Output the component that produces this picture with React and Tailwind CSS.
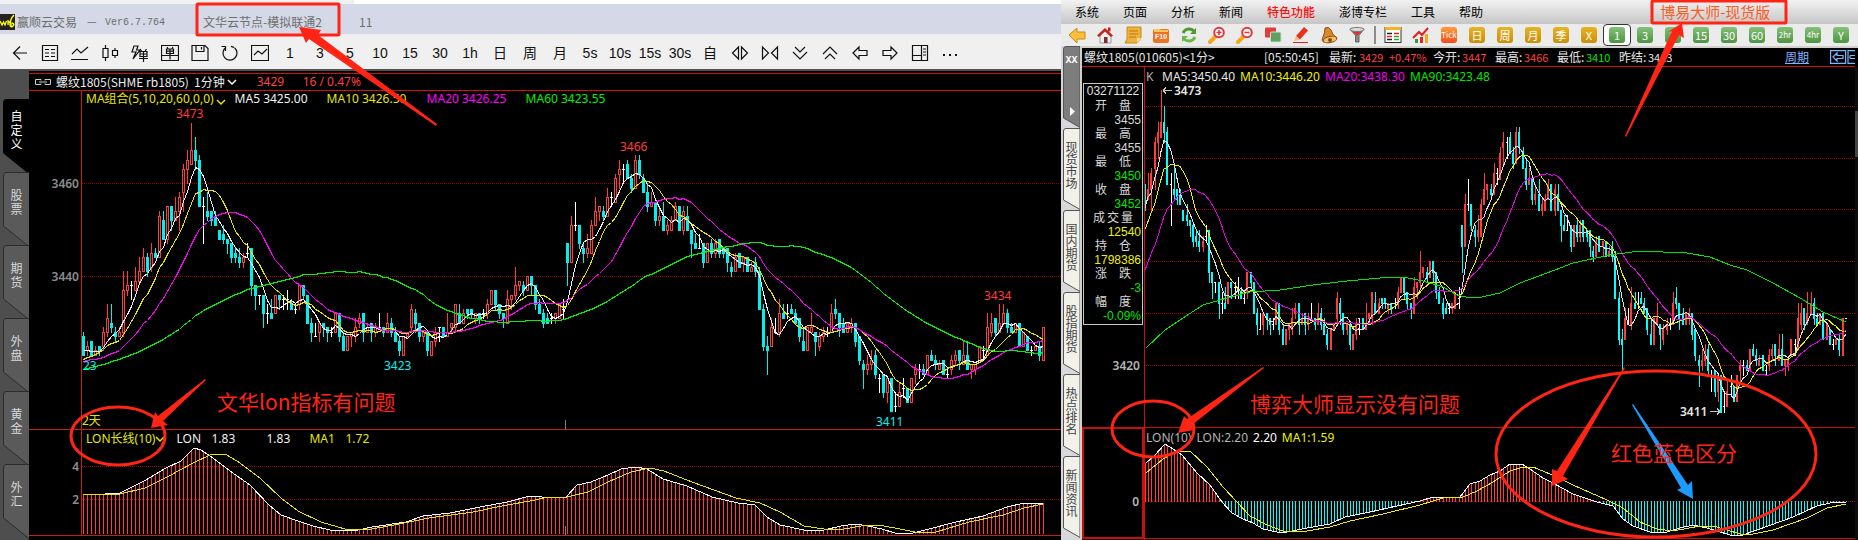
import React from 'react';

// open, high, low, close (minus 3400), one minute bars
const BARS = [
  [27,28,23,23],[24,26,23,25],[26,26,23,23],[23,25,23,24],[25,25,23,24],[25,29,24,28],[28,34,27,31],[30,34,28,29],[28,29,26,27],[27,29,27,28],
  [28,41,27,37],[37,41,36,38],[38,39,35,38],[37,42,37,39],[39,44,39,41],[41,46,41,44],[44,45,40,41],[42,47,41,45],[45,46,44,44],[44,54,44,53],
  [52,54,48,48],[48,55,47,55],[55,55,50,52],[52,57,52,54],[54,58,50,57],[58,64,54,63],[63,67,60,65],[64,73,64,67],[67,70,63,65],[65,66,55,55],
  [55,57,47,55],[54,58,52,53],[54,54,51,52],[53,54,51,51],[50,50,48,48],[49,51,47,48],[48,48,45,47],[47,47,43,44],[45,46,43,44],[44,46,42,43],
  [43,45,42,44],[45,47,44,45],[46,46,36,38],[38,38,33,36],[36,36,34,36],[36,36,29,32],[32,34,30,32],[32,35,31,31],[32,36,32,36],[36,36,33,35],
  [35,36,33,35],[35,37,33,35],[34,35,33,33],[33,34,32,33],[34,38,33,38],[38,38,35,36],[36,36,30,30],[30,31,26,28],[27,30,27,27],[28,30,26,30],
  [30,30,27,29],[29,29,26,28],[28,29,27,28],[28,32,28,32],[32,32,26,27],[27,28,24,24],[24,27,24,27],[27,28,25,28],[27,31,26,29],[30,32,29,31],
  [32,32,26,28],[28,30,28,29],[30,30,26,28],[28,30,27,29],[29,32,29,29],[29,29,27,28],[28,32,28,30],[30,31,27,28],[28,29,26,26],[26,27,23,24],
  [23,27,23,27],[27,28,27,28],[29,34,28,33],[32,33,28,30],[30,30,26,27],[27,28,26,28],[28,28,23,24],[23,26,23,26],[26,29,25,28],[29,29,26,29],
  [29,29,27,27],[27,32,27,28],[29,30,28,30],[29,34,28,34],[32,34,30,30],[30,33,30,32],[33,33,31,32],[33,33,31,32],[31,32,30,32],[32,32,30,31],
  [32,33,31,32],[32,35,31,34],[34,37,34,37],[37,37,33,34],[34,34,31,32],[32,32,29,31],[30,37,30,35],[35,36,33,36],[36,42,35,38],[38,39,37,39],
  [38,39,36,37],[37,40,37,40],[40,40,36,38],[38,38,33,34],[34,35,32,32],[32,33,29,30],[31,32,30,30],[31,32,30,31],[31,32,30,32],[31,34,31,34],
  [33,35,31,33],[47,47,38,43],[43,53,43,51],[51,56,50,51],[51,51,46,47],[46,47,43,45],[45,49,44,46],[45,52,45,51],[51,57,51,54],[54,55,52,55],
  [54,55,52,53],[53,59,53,57],[57,58,55,57],[56,62,56,61],[62,65,59,63],[63,64,60,63],[64,65,61,61],[61,62,58,59],[59,66,59,65],[65,66,61,62],
  [61,62,58,58],[58,60,54,55],[55,58,55,56],[56,56,51,52],[52,55,51,53],[53,56,50,50],[50,52,49,51],[50,53,50,52],[52,56,52,55],[55,55,50,50],
  [50,55,49,54],[53,55,50,50],[50,50,44,47],[47,49,46,46],[46,49,46,46],[47,47,42,43],[43,47,43,47],[47,48,44,45],[45,48,44,47],[48,48,44,45],
  [46,46,44,45],[46,46,41,43],[42,43,40,41],[41,45,41,44],[45,45,42,42],[43,44,41,44],[44,44,41,41],[41,43,41,42],[43,44,40,41],[41,42,33,33],
  [33,34,24,25],[25,27,19,24],[25,31,25,29],[28,31,28,28],[28,35,27,32],[32,34,31,31],[32,34,31,32],[33,34,32,32],[32,33,30,30],[31,31,26,27],
  [26,29,24,24],[24,29,24,29],[28,32,28,29],[28,28,23,26],[25,28,24,27],[27,29,26,28],[28,29,27,28],[28,34,28,32],[33,35,31,32],[32,32,27,29],
  [30,31,28,28],[28,30,28,30],[29,31,28,30],[30,30,25,26],[27,27,21,22],[21,22,16,20],[20,23,19,21],[21,24,20,22],[23,24,18,19],[18,19,15,18],
  [19,19,14,15],[15,18,13,18],[18,18,11,11],[12,15,11,12],[12,17,12,15],[16,18,14,16],[16,16,13,13],[13,18,13,18],[19,21,17,20],[20,21,18,20],
  [20,21,19,19],[19,23,19,23],[23,24,22,22],[22,23,20,21],[20,22,20,21],[22,22,19,19],[19,20,18,19],[20,23,19,22],[22,24,21,23],[24,24,20,22],
  [21,26,21,23],[23,26,20,20],[20,21,18,21],[20,21,19,21],[22,25,22,25],[24,25,22,24],[23,32,23,29],[28,32,27,30],[31,31,27,28],[28,34,28,30],
  [30,34,30,32],[32,33,28,29],[29,30,28,28],[28,30,28,30],[30,30,25,25],[25,28,25,28],[27,27,24,24],[24,25,23,24],[24,25,24,25],[25,26,22,23],
  [22,29,22,29],
];

// the right terminal already has the next minute open
const BARS_B = [...BARS, [29, 29, 29, 29]];

// closes before the first visible bar, so the averages start with the chart
const WARMUP = [
  ...Array(10).fill(12.6), ...Array(10).fill(19.1), ...Array(20).fill(22.5),
  ...Array(10).fill(21.5), ...Array(5).fill(20.2), ...Array(4).fill(24.25),
];
const CLOSES = [...WARMUP, ...BARS_B.map((b) => b[3])];

const average = (n, bars) =>
  bars.map((_, i) => {
    const end = i + WARMUP.length + 1;
    return CLOSES.slice(end - n, end).reduce((a, b) => a + b, 0) / n;
  });

const UP = '#ff3c3c';
const DOWN = '#00f0f0';

const toPath = (points) => points.map(([x, y]) => `${x},${y}`).join(' ');

const valueAt = (points, x) => {
  const k = points.findIndex((p) => p[0] >= x);
  if (k === 0) return points[0][1];
  if (k < 0) return points[points.length - 1][1];
  const [x0, y0] = points[k - 1];
  const [x1, y1] = points[k];
  return y0 + ((y1 - y0) * (x - x0)) / (x1 - x0);
};

const LON_A = [[83,494],[105,494],[120,493],[144,481],[156,474],[166,468],[181,461],[194,448],[201,450],[213,458],[230,471],[250,485],[269,505],[281,515],[298,521],[313,526],[330,530],[358,530],[372,527],[406,522],[423,516],[450,513],[480,507],[507,502],[530,496],[554,498],[566,497],[577,485],[591,482],[608,475],[621,469],[636,467],[647,469],[663,479],[687,486],[712,497],[738,503],[755,505],[767,517],[780,525],[804,530],[824,530],[841,526],[855,524],[868,526],[882,529],[895,533],[909,534],[929,529],[956,522],[983,516],[1007,507],[1024,503],[1043,503]];
const LON_A_MA = [[83,494],[120,494],[145,488],[169,476],[193,463],[210,455],[225,454],[237,461],[260,478],[281,498],[298,511],[321,522],[345,529],[372,529],[399,524],[429,518],[473,512],[507,505],[530,501],[544,498],[567,497],[588,492],[608,482],[631,472],[650,468],[664,471],[692,482],[736,498],[760,503],[780,512],[804,526],[824,529],[844,529],[861,526],[878,525],[895,528],[915,532],[936,532],[969,522],[1003,515],[1024,508],[1043,504]];
const LON_B = [[1146,463],[1155,455],[1165,444],[1173,449],[1182,455],[1197,473],[1210,485],[1222,502],[1232,513],[1243,519],[1253,523],[1263,529],[1277,532],[1287,532],[1307,528],[1330,524],[1345,517],[1370,512],[1397,506],[1420,501],[1433,497],[1460,497],[1470,484],[1480,481],[1490,475],[1500,471],[1510,464],[1522,464],[1530,469],[1543,478],[1553,483],[1573,494],[1597,502],[1613,506],[1623,519],[1633,526],[1650,532],[1667,532],[1680,528],[1693,525],[1707,528],[1730,535],[1743,535],[1757,530],[1793,517],[1817,506],[1830,503],[1846,502]];
const LON_B_MA = [[1146,473],[1163,459],[1177,451],[1190,451],[1207,467],[1223,487],[1237,502],[1250,516],[1267,525],[1283,531],[1307,531],[1330,527],[1350,521],[1383,514],[1420,505],[1443,498],[1463,497],[1477,491],[1493,482],[1510,471],[1523,467],[1533,467],[1550,474],[1573,485],[1607,500],[1623,508],[1640,522],[1657,529],[1673,531],[1700,526],[1717,527],[1740,534],[1753,534],[1773,530],[1807,518],[1827,508],[1846,504]];
const MA90 = [[1146,348],[1165,330],[1180,320],[1203,305],[1227,298],[1250,292],[1280,290],[1313,285],[1347,281],[1380,278],[1403,277],[1423,281],[1443,287],[1457,295],[1470,298],[1482,297],[1500,293],[1520,283],[1555,270],[1573,263],[1610,255],[1640,251],[1663,252],[1687,253],[1710,257],[1730,265],[1747,270],[1773,283],[1800,298],[1823,312],[1846,322]];

const TEXT = 'font-["Noto_Sans","Noto_Sans_CJK_SC",sans-serif] text-xs';

const Line = ({ points, color }) => (
  <polyline points={toPath(points)} fill="none" stroke={color} strokeWidth="1" />
);

const Grid = ({ ys, x1, x2 }) =>
  ys.map((y) => <line key={y} x1={x1} x2={x2} y1={y + 0.5} y2={y + 0.5} stroke="#a00000" strokeDasharray="1 1" />);

function HollowCandle({ bar, x, y }) {
  const [o, h, l, c] = bar;
  const top = Math.round(y(Math.max(o, c)));
  const bottom = Math.round(y(Math.min(o, c)));
  const high = Math.round(y(h));
  const low = Math.round(y(l));
  const color = o === c ? '#fff' : c > o ? UP : DOWN;
  return (
    <g>
      <rect x={x} y={high} width="1" height={low - high + 1} fill={color} />
      {c > o && <rect x={x - 0.5} y={top + 0.5} width="2" height={bottom - top} fill="#000" stroke={color} />}
      {c <= o && <rect x={x - 1} y={top} width="3" height={bottom - top + 1} fill={color} />}
    </g>
  );
}

function SolidCandle({ bar, x, y }) {
  const [o, h, l, c] = bar;
  const top = Math.round(y(Math.max(o, c)));
  const bottom = Math.round(y(Math.min(o, c)));
  const high = Math.round(y(h));
  const color = o === c ? '#fff' : c > o ? UP : '#00ffff';
  return (
    <g fill={color}>
      <rect x={x} y={high} width="1" height={Math.round(y(l)) - high + 1} />
      <rect x={x - 1} y={top} width="2" height={bottom - top + 1} />
    </g>
  );
}

const leftX = (i) => 83 + 4 * i;
const leftY = (p) => 183 + (60 - p) * 4.65;
const rightX = (i) => Math.round(1161 + (i - 27) * 3.2);
const rightY = (p) => 106 + (70 - p) * 5.18;

function LeftPriceChart() {
  const line = (n) => average(n, BARS).map((v, i) => [leftX(i) + 0.5, Math.round(leftY(v)) + 0.5]);
  return (
    <svg viewBox="29 91 1032 338" className={`block w-full ${TEXT}`} shapeRendering="crispEdges">
      <Grid ys={[183, 276]} x1={82} x2={1061} />
      {BARS.map((b, i) => <HollowCandle key={i} bar={b} x={leftX(i)} y={leftY} />)}
      <Line points={line(5)} color="#f0f0f0" />
      <Line points={line(10)} color="#e6e600" />
      <Line points={line(20)} color="#ff00ff" />
      <Line points={line(60)} color="#00f000" />
      <rect x="81" y="91" width="1" height="338" fill="#c81e14" />
      <rect x="565" y="420" width="1" height="9" fill="#808080" />
      <g fill="#8c8c8c" fontWeight="600" textAnchor="end">
        <text x="79" y="188">3460</text>
        <text x="79" y="281">3440</text>
      </g>
      <g fill={UP}>
        <text x="176" y="118">3473</text>
        <text x="620" y="151">3466</text>
        <text x="984" y="300">3434</text>
      </g>
      <g fill={DOWN}>
        <text x="83" y="370">23</text>
        <text x="384" y="370">3423</text>
        <text x="876" y="426">3411</text>
      </g>
      <text x="82" y="425" fill="#e6e600">2天</text>
    </svg>
  );
}

function LeftLonChart() {
  return (
    <svg viewBox="29 430 1032 105" className={`block w-full ${TEXT}`} shapeRendering="crispEdges">
      <Grid ys={[466, 499]} x1={82} x2={1061} />
      {BARS.map((_, i) => {
        const top = Math.round(valueAt(LON_A, leftX(i)));
        return <rect key={i} x={leftX(i)} y={top} width="1" height={534 - top} fill={UP} />;
      })}
      <Line points={LON_A} color="#fff" />
      <Line points={LON_A_MA} color="#e6e600" />
      <rect x="81" y="430" width="1" height="105" fill="#c81e14" />
      <rect x="565" y="526" width="1" height="9" fill="#808080" />
      <g fill="#8c8c8c" fontWeight="600" textAnchor="end">
        <text x="79" y="471">4</text>
        <text x="79" y="504">2</text>
      </g>
    </svg>
  );
}

function RightPriceChart() {
  const line = (n) => average(n, BARS_B).map((v, i) => [rightX(i), rightY(v)]).slice(22);
  return (
    <svg viewBox="1145 67 710 360" className={`block w-full ${TEXT}`} shapeRendering="crispEdges">
      <Grid ys={[106, 158, 209, 261, 313, 365]} x1={1146} x2={1855} />
      {BARS_B.map((b, i) => i >= 22 && <SolidCandle key={i} bar={b} x={rightX(i)} y={rightY} />)}
      <Line points={line(5)} color="#e0e0e0" />
      <Line points={line(10)} color="#f0f000" />
      <Line points={line(20)} color="#e600e6" />
      <Line points={MA90} color="#00e600" />
      <g fill="#e6e6e6" fontWeight="600">
        <text x="1174" y="95">3473</text>
        <text x="1680" y="416">3411</text>
      </g>
      <path d="M1163 90.5h9M1163 90.5l3-3M1163 90.5l3 3M1710 411.5h10M1720 411.5l-3-3M1720 411.5l-3 3" stroke="#c8c8c8" fill="none" />
    </svg>
  );
}

function RightLonChart() {
  return (
    <svg viewBox="1145 428 710 110" className="block w-full" shapeRendering="crispEdges">
      <Grid ys={[501]} x1={1146} x2={1855} />
      {BARS_B.map((_, i) => {
        if (i < 22) return null;
        const v = Math.round(valueAt(LON_B, rightX(i)));
        return v < 502
          ? <rect key={i} x={rightX(i)} y={v} width="1" height={502 - v} fill={UP} />
          : <rect key={i} x={rightX(i)} y={501} width="1" height={v - 501} fill="#00ffff" />;
      })}
      <Line points={LON_B} color="#fff" />
      <Line points={LON_B_MA} color="#f0f000" />
    </svg>
  );
}

const Ico = ({ children, size = 18 }) => (
  <svg width={size} height={size} viewBox="0 0 18 18" fill="none" stroke="#111" strokeWidth="1.2">
    {children}
  </svg>
);

const LEFT_TOOLS = [
  ['back', <Ico><path d="M3 9h13M9 2.500L2.500 9L9 15.500" /></Ico>],
  ['list', <Ico><path d="M1.500 1.500h15v15h-15zM4 5.500h4M10 5.500h4M4 9h4M10 9h4M4 12.500h4M10 12.500h4" /></Ico>],
  ['trend', <Ico><path d="M1 10l5-5 4 4 7-6M0 15.500h17" /></Ico>],
  ['candles', <Ico><path d="M2 4.500h5v9H2zM4.500 1v3.500M4.500 13.500V17M11.500 6.500h5v5h-5zM14 4v2.500M14 11.500V14" /></Ico>],
  ['flash order', <Ico><path d="M7 2H3L1 8h4l-3 7 7-9H5.500zM9 5l1.500 2M15.500 5L14 7M9 7.500h7v5H9zM9 10h7M8 14.500h9M12.500 7.500V18" /></Ico>],
  ['order', <Ico><path d="M.5 1.500h17v15H.5zM6 3l1 1.500M12 3l-1 1.500M5.500 5h7v4.500h-7zM5.500 7.200h7M1 11.500h16M9 5v10.500" /></Ico>],
  ['save', <Ico><path d="M1 1.500h13l3 3v12H1zM5 1.500v6h8v-6M10.500 3v2.500" /></Ico>],
  ['refresh', <Ico><path d="M5 3.300A7 7 0 1 0 13.500 3.700M4.500 7V2.500H0.500M10 2.300A7 7 0 0 1 13 3.500" /></Ico>],
  ['chart', <Ico><path d="M.5 1.500h17v15H.5zM3 11l4-4 4 3 5-5" /></Ico>],
  ['1'], ['3'], ['5'], ['10'], ['15'], ['30'], ['1h'], ['日'], ['周'], ['月'], ['5s'], ['10s'], ['15s'], ['30s'], ['自'],
  ['widen', <Ico><path d="M7.500 3v12L1.500 9zM10.500 3v12l6-6z" /></Ico>],
  ['narrow', <Ico><path d="M1.500 3v12l6-6zM16.500 3v12l-6-6z" /></Ico>],
  ['down', <Ico><path d="M4 3l5 5 5-5M2 8l7 7 7-7" /></Ico>],
  ['up', <Ico><path d="M4 15l5-5 5 5M2 10l7-7 7 7" /></Ico>],
  ['left', <Ico><path d="M2 9l6-6v3.500h8v5H8V15z" /></Ico>],
  ['right', <Ico><path d="M16 9l-6-6v3.500H2v5h8V15z" /></Ico>],
  ['layout', <Ico><path d="M1.500 1.500h15v15h-15zM10.500 1.500v15M1.500 11.500h9M12 5h3M12 8h3M12 11h3" /></Ico>],
  ['more', <Ico><path d="M2 11h2M8 11h2M14 11h2" strokeWidth="2" /></Ico>],
];

const Chevron = ({ color }) => (
  <svg width="10" height="7" viewBox="0 0 10 7" fill="none" stroke={color} strokeWidth="1.500"><path d="M1 1l4 4 4-4" /></svg>
);

const SIDE_TABS = ['自定义', '股票', '期货', '外盘', '黄金', '外汇'];

function SideTab({ label, active }) {
  return (
    <button className="relative -mb-[2px] block h-[75px] w-full shrink-0">
      <svg viewBox="0 0 29 75" className="absolute inset-0 h-full w-full">
        <path d="M29.500 .5H6Q3.500 .5 3.500 4V54L29.500 75z" fill={active ? '#000' : '#5a5a5a'} stroke={active ? '#000' : '#2c2c2c'} />
      </svg>
      <span className={`absolute inset-x-0 top-[10px] flex flex-col items-center pl-[4px] text-xs leading-[14px] ${active ? 'text-white' : 'pt-[6px] text-[#d8d8d8]'}`}>
        {[...label].map((ch) => <span key={ch}>{ch}</span>)}
      </span>
    </button>
  );
}

function LeftWindow() {
  return (
    <div className="flex min-w-0 flex-col bg-black">
      <div className="flex h-[4px]"><div className="w-1/3 bg-[#f0f0f0]" /><div className="flex-1 bg-white" /></div>
      <div className="flex h-[30px] items-center bg-[#d5d8e6] pt-[6px] text-xs text-[#6e6e6e]">
        <svg width="15" height="16" viewBox="0 0 15 16">
          <rect width="15" height="16" fill="#222" />
          <path d="M0 7l2 4 1.500-3 1.500 3 1.500-4M8 6v5M8 9q2-2 3 0v3" stroke="#ff0" strokeWidth="1.300" fill="none" />
          <path d="M14 1Q10 5 10 11q1 3 3 1t-1-3" stroke="#ff0" strokeWidth="1.500" fill="none" />
        </svg>
        <span className="ml-[2px] w-[88px]">赢顺云交易 <span className="ml-[6px]">－</span></span>
        <span className="w-[98px] pt-[2px] font-['Liberation_Mono',monospace] text-[10px]">Ver6.7.764</span>
        <span className="w-[156px]">文华云节点-模拟联通2</span>
        <span>11</span>
      </div>
      <div className="flex h-[35px] items-center bg-[#f0f0f0] pt-[2px] pl-[5px]">
        {LEFT_TOOLS.map(([name, icon]) => (
          <button key={name} aria-label={name} className="flex h-[30px] w-[30px] items-center justify-center font-['Liberation_Sans','Noto_Sans_CJK_SC',sans-serif] text-sm text-[#111]">
            {icon || name}
          </button>
        ))}
      </div>
      <div className="h-[2px] bg-[#505050]" />
      <div className="flex flex-1">
        <div className="flex w-[29px] shrink-0 flex-col overflow-hidden bg-[#4e4e4e] pt-[28px]">
          {SIDE_TABS.map((t, i) => <SideTab key={t} label={t} active={i === 0} />)}
        </div>
        <div className="min-w-0 flex-1">
          <div className="mt-[2px] flex h-[18px] items-center border-y border-[#d20f0a] text-xs text-[#ececec]">
            <svg width="16" height="6" viewBox="0 0 16 6" className="ml-[6px]" fill="none" stroke="#ccc"><path d="M6 1.500V.5H.5v5H6v-1M10 1.500V.5h5.500v5H10v-1M4 3h8" /></svg>
            <span className="ml-[5px] w-[138px] whitespace-nowrap">螺纹1805(SHME rb1805)</span>
            <span className="mr-[2px]">1分钟</span>
            <Chevron color="#fff" />
            <span className={`ml-[20px] w-[46px] text-[#ff4040] ${TEXT}`}>3429</span>
            <span className={`text-[#ff4040] ${TEXT}`}>16 / 0.47%</span>
          </div>
          <div className="relative">
            <div className={`absolute top-0 left-[57px] flex h-4 items-center whitespace-nowrap ${TEXT}`}>
              <span className="text-[#e6e600]">MA组合(5,10,20,60,0,0)</span>
              <span className="ml-[2px] pt-[6px]"><Chevron color="#e6e600" /></span>
              <span className="ml-[9px] w-[92px] text-[#f0f0f0]">MA5 3425.00</span>
              <span className="w-[100px] text-[#e6e600]">MA10 3426.50</span>
              <span className="w-[99px] text-[#ff00ff]">MA20 3426.25</span>
              <span className="text-[#00f000]">MA60 3423.55</span>
            </div>
            <LeftPriceChart />
          </div>
          <div className="relative border-y border-[#c81e14]">
            <div className={`absolute top-0 left-[57px] flex h-[18px] items-center whitespace-nowrap ${TEXT}`}>
              <span className="text-[#e6e600]">LON长线(10)</span>
              <Chevron color="#e6e600" />
              <span className="ml-[11px] w-[35px] text-[#f0f0f0]">LON</span>
              <span className="w-[55px] text-[#f0f0f0]">1.83</span>
              <span className="w-[43px] text-[#f0f0f0]">1.83</span>
              <span className="w-[36px] text-[#e6e600]">MA1</span>
              <span className="text-[#e6e600]">1.72</span>
            </div>
            <LeftLonChart />
          </div>
        </div>
      </div>
    </div>
  );
}

const Mini = ({ children }) => <svg width="18" height="18" viewBox="0 0 18 18">{children}</svg>;

const Magnifier = ({ plus }) => (
  <Mini>
    <path d="M2 16l6-6" stroke="#f5a81c" strokeWidth="4" strokeLinecap="round" />
    <circle cx="11" cy="6.500" r="4.800" fill="#fff" stroke="#e23a3a" strokeWidth="2" />
    <path d={plus ? 'M8.500 6.500h5M11 4v5' : 'M8.500 6.500h5'} stroke="#e23a3a" strokeWidth="1.600" />
  </Mini>
);

const RIGHT_ICONS = [
  ['back', <Mini><path d="M1 9l8-7v4h8v7H9v4z" fill="#f9bf3c" stroke="#c98a14" /></Mini>],
  ['home', <Mini><path d="M4 9v8h11V9L9 4z" fill="#eee" stroke="#999" /><path d="M1 9.500L9 2l8 7.500-2 1.500L9 5.500 3 11z" fill="#c8201c" /><rect x="12" y="1.500" width="2.500" height="4" fill="#c8201c" /><rect x="8" y="11" width="3.500" height="6" fill="#7a3030" /></Mini>],
  ['note', <Mini><path d="M3 1h14v11l-4 5H1l2-4z" fill="#eeb23c" stroke="#c98a1c" /><path d="M5 5h9M5 8h9M5 11h7" stroke="#b97a10" /><path d="M17 12h-4v5z" fill="#ffe08a" /></Mini>],
  ['F10', <Mini><rect x="1" y="3" width="16" height="14" rx="2" fill="#f07020" /><path d="M2 6V3h6l1 1h7v2z" fill="#f7c95a" /><text x="9" y="13" fontSize="7" fontWeight="700" fill="#fff" textAnchor="middle" fontFamily="Liberation Sans">F10</text></Mini>],
  ['refresh', <Mini><path d="M3 7q2-4 6-4 3 0 5 2" fill="none" stroke="#4f9a30" strokeWidth="3" /><path d="M16 2v6h-6z" fill="#4f9a30" /><path d="M15 11q-2 4-6 4-3 0-5-2" fill="none" stroke="#6bb845" strokeWidth="3" /><path d="M2 16v-6h6z" fill="#6bb845" /></Mini>],
  ['zoom in', <Magnifier plus />],
  ['zoom out', <Magnifier />],
  ['overlay', <Mini><rect x="1" y="1.500" width="11" height="10" rx="1" fill="#e23c3c" /><rect x="6.500" y="6" width="10.500" height="10" rx="1" fill="#5fa05f" stroke="#cde0cd" /></Mini>],
  ['draw', <Mini><path d="M4 10L12 1l4 3.500-8 9z" fill="#e8321e" /><path d="M4 10l4 3.500L2 15z" fill="#f5c07a" /><path d="M1 16.500h15" stroke="#d22" /></Mini>],
  ['alarm', <Mini><path d="M5 2q4-2 6 2 1 5 6 8L4 16Q1 15 3 11q2-4 2-9z" fill="#d98a2a" stroke="#8a4a10" /><ellipse cx="10" cy="13.500" rx="7" ry="3" transform="rotate(-12 10 13.500)" fill="#f5c060" stroke="#8a4a10" /><circle cx="10" cy="14" r="2" fill="#8a4a10" /></Mini>],
  ['filter', <Mini><path d="M2 3h14l-5 6.500V16H7.500V9.500z" fill="#8a8a8a" stroke="#666" /><path d="M4 5h10l-5 5z" fill="#e03030" /><ellipse cx="9" cy="3.500" rx="7" ry="2" fill="#ddd" stroke="#777" /></Mini>],
];

const BADGES = [
  ['Tick', 'from-[#ff9a3c] to-[#f04c1c]'],
  ['日', 'from-[#e6b422] to-[#c98e08]'], ['周', 'from-[#e6b422] to-[#c98e08]'], ['月', 'from-[#e6b422] to-[#c98e08]'],
  ['季', 'from-[#e6b422] to-[#c98e08]'], ['X', 'from-[#e6b422] to-[#c98e08]'],
  ['1', 'from-[#86c07a] to-[#4c9440]'], ['3', 'from-[#86c07a] to-[#4c9440]'], ['5', 'from-[#86c07a] to-[#4c9440]'],
  ['15', 'from-[#86c07a] to-[#4c9440]'], ['30', 'from-[#86c07a] to-[#4c9440]'], ['60', 'from-[#86c07a] to-[#4c9440]'],
  ['2hr', 'from-[#86c07a] to-[#4c9440]'], ['4hr', 'from-[#86c07a] to-[#4c9440]'], ['Y', 'from-[#86c07a] to-[#4c9440]'],
];

const MENU = ['系统', '页面', '分析', '新闻', '特色功能', '澎博专栏', '工具', '帮助'];

const PAGES = ['现货市场', '国内期货', '股指期货', '热点排名', '新闻资讯'];

const QUOTE = [
  ['开 盘', '3455', 'text-[#d8d8d8]'],
  ['最 高', '3455', 'text-[#d8d8d8]'],
  ['最 低', '3450', 'text-[#00e600]'],
  ['收 盘', '3452', 'text-[#00e600]'],
  ['成 交 量', '12540', 'text-[#f0f000]'],
  ['持 仓', '1798386', 'text-[#f0f000]'],
  ['涨 跌', '-3', 'text-[#00e600]'],
  ['幅 度', '-0.09%', 'text-[#00e600]'],
];

const SUMMARY = [
  ['今开:', '3447', 'text-[#ff4040]'],
  ['最高:', '3466', 'text-[#ff4040]'],
  ['最低:', '3410', 'text-[#00e600]'],
  ['昨结:', '3413', 'text-[#e6e6e6]'],
];

function PageTab({ label }) {
  return (
    <button className="relative block h-[82px] w-[17px] shrink-0">
      <svg viewBox="0 0 17 82" className="absolute inset-0 h-full w-full">
        <path d="M17 .5H3Q.5 .5 .5 3V72L17 81.500z" fill="#f1f1ea" stroke="#555" />
      </svg>
      <span className="absolute inset-x-0 top-[14px] flex flex-col items-center font-['Liberation_Sans','Noto_Sans_CJK_SC',sans-serif] text-xs text-[#444]">
        {[...label].map((ch) => <span key={ch} className="h-3 leading-3">{ch}</span>)}
      </span>
    </button>
  );
}

function QuoteBox() {
  return (
    <div className="m-[1px] mt-[16px] border border-[#c8c8c8] pb-[1px] font-['Liberation_Sans','Noto_Sans_CJK_SC',sans-serif] text-xs leading-[14px]">
      <div className="text-center leading-[15px] text-[#e0e0e0]">03271122</div>
      <dl>
        {QUOTE.map(([name, value, color]) => (
          <React.Fragment key={name}>
            <dt className="flex justify-center text-[#d8d8d8]">
              {name.split(' ').map((ch) => <span key={ch} className={name.length > 3 ? 'mx-[1px]' : 'mx-[6px]'}>{ch}</span>)}
            </dt>
            <dd className={`pr-[1px] text-right ${color}`}>{value}</dd>
          </React.Fragment>
        ))}
      </dl>
    </div>
  );
}

function RightWindow() {
  return (
    <div className="flex min-w-0 flex-col bg-black">
      <div className="flex h-[24px] items-center gap-6 bg-linear-to-b from-[#f2f2f2] to-[#c6c6c6] pl-[14px] text-xs text-black">
        {MENU.map((m) => (
          <button key={m} className={m === '特色功能' ? 'font-medium whitespace-nowrap text-[#ff1010]' : 'whitespace-nowrap'}>{m}</button>
        ))}
        <span className="ml-[153px] text-[15px] whitespace-nowrap text-[#ff5a1e]">博易大师-现货版</span>
      </div>
      <div className="flex h-[22px] items-center bg-[#ebebeb] pl-[2px]">
        {RIGHT_ICONS.map(([name, icon]) => (
          <button key={name} aria-label={name} className="flex w-[28px] shrink-0 justify-center">{icon}</button>
        ))}
        <span className="mx-[3px] h-[18px] w-[2px] bg-[#8c8c8c]" />
        <button aria-label="quotes" className="flex w-[28px] shrink-0 justify-center">
          <Mini><rect x="1" y="1.500" width="16" height="15" fill="#fff" stroke="#333" /><rect x="1" y="1" width="16" height="3" fill="#f5b41e" /><path d="M3 7.500h5M3 13.500h5" stroke="#222" strokeWidth="1.500" /><path d="M10 7.500h5M3 10.500h5" stroke="#e22" strokeWidth="1.500" /><path d="M10 10.500h5M10 13.500h5" stroke="#2a2" strokeWidth="1.500" /></Mini>
        </button>
        <button aria-label="analysis" className="flex w-[28px] shrink-0 justify-center">
          <Mini><path d="M3 17v-4h3v4z" fill="#393" /><path d="M8 17v-6h3v6z" fill="#e22" /><path d="M13 17V8h3v9z" fill="#f5a81c" /><path d="M1 12l6-6 3 3 6-7" stroke="#e22020" strokeWidth="2" fill="none" /></Mini>
        </button>
        {BADGES.map(([name, tone]) => (
          <button key={name} className={name === '1' ? 'flex h-[22px] w-[28px] shrink-0 items-center justify-center rounded border border-[#333] bg-white' : 'flex w-[28px] shrink-0 items-center justify-center'}>
            <span className={`flex h-4 w-4 items-center justify-center rounded-[3px] bg-linear-to-b leading-4 text-white ${name.length > 2 ? 'text-[8px]' : 'text-[11px]'} ${tone}`}>{name}</span>
          </button>
        ))}
      </div>
      <div className="flex flex-1">
        <div className="flex w-[21px] shrink-0 flex-col overflow-hidden border-r-2 border-[#d2d0cb] bg-[#d8d8dc] pl-[2px]">
          <button className="relative block h-[82px] w-[17px] shrink-0">
            <svg viewBox="0 0 17 82" className="absolute inset-0 h-full w-full">
              <path d="M17 .5H3Q.5 .5 .5 3V72L17 81.500z" fill="#7d7d7d" stroke="#555" />
              <path d="M7 61l5 4.500-5 4.500z" fill="#fff" />
            </svg>
            <span className="absolute inset-x-0 top-[9px] text-center font-['Liberation_Mono',monospace] text-[10px] leading-3 font-bold text-white">XX</span>
          </button>
          {PAGES.map((p) => <PageTab key={p} label={p} />)}
        </div>
        <div className="flex min-w-0 flex-1 flex-col border-t-2 border-[#d2d0cb]">
          <div className="mr-[3px] flex h-[19px] items-center overflow-hidden border-b border-[#c80f0a] pl-[2px] text-xs whitespace-nowrap text-[#e6e6e6]">
            <span className="w-[180px]">螺纹1805(010605)&lt;1分&gt;</span>
            <span className="w-[65px]">[05:50:45]</span>
            <span className="w-[30px]">最新:</span>
            <span className="w-[30px] text-[11px] text-[#ff4040]">3429</span>
            <span className="w-[44px] text-[11px] text-[#ff4040]">+0.47%</span>
            {SUMMARY.map(([name, value, color]) => (
              <span key={name} className="flex w-[62px] items-center">
                <span className="w-[29px]">{name}</span>
                <span className={`text-[11px] ${color}`}>{value}</span>
              </span>
            ))}
            <a href="#period" className="ml-auto text-[#7db4ff] underline">周期</a>
            <svg width="25" height="14" viewBox="0 0 25 14" className="ml-[21px]" fill="none" stroke="#7db4ff" strokeWidth="1.200">
              <path d="M.6 .6h15v12.800H.6zM3 7l4-4v2.500h6v3H7V11zM25 .6h-7v12.800h7M20 5.500h5M20 8.500h5M20 5.500v3" />
            </svg>
          </div>
          <div className="relative flex flex-1">
            <div className="flex w-[63px] shrink-0 flex-col border-r border-[#c80f0a]">
              <div className="h-[360px]">
                <QuoteBox />
                <div className={`mt-[33px] pr-[4px] text-right font-semibold text-[#b4b4b4] ${TEXT}`}>3420</div>
              </div>
              <div className={`flex h-[112px] items-center justify-end border-2 border-[#c80f0a] pt-[38px] pr-[3px] font-semibold text-[#b4b4b4] ${TEXT}`}>0</div>
            </div>
            <div className="min-w-0 flex-1">
              <div className="relative">
                <div className={`absolute top-[2px] left-[1px] flex h-[16px] items-center whitespace-nowrap ${TEXT}`}>
                  <span className="w-[16px] text-[#b4b4b4]">K</span>
                  <span className="w-[78px] text-[#e6e6e6]">MA5:3450.40</span>
                  <span className="w-[85px] text-[#f0f000]">MA10:3446.20</span>
                  <span className="w-[85px] text-[#f000f0]">MA20:3438.30</span>
                  <span className="text-[#00e600]">MA90:3423.48</span>
                </div>
                <RightPriceChart />
              </div>
              <div className="relative border-y border-[#c80f0a]">
                <div className={`absolute top-0 left-[1px] flex h-[20px] items-center gap-[5px] whitespace-nowrap ${TEXT}`}>
                  <span className="text-[#b4b4b4]">LON(10)</span>
                  <span className="text-[#b4b4b4]">LON:2.20</span>
                  <span className="text-white">2.20</span>
                  <span className="text-[#f0f000]">MA1:1.59</span>
                </div>
                <RightLonChart />
              </div>
            </div>
            <div className="w-[3px] shrink-0 bg-[#0c0c0c] pt-[44px]"><div className="h-[46px] bg-[#444]" /></div>
          </div>
        </div>
      </div>
    </div>
  );
}

function Marks() {
  return (
    <svg viewBox="0 0 1858 540" className="pointer-events-none absolute top-0 left-0 w-full font-['Noto_Sans_CJK_SC',sans-serif] text-[21px]">
      <g fill="none" stroke="#ff2414" strokeWidth="3">
        <rect x="197" y="4" width="142" height="31" rx="1" />
        <rect x="1652" y="1" width="134" height="22" rx="1" />
        <ellipse cx="118" cy="436" rx="47" ry="29" />
        <ellipse cx="1153" cy="429" rx="41" ry="28" />
        <ellipse cx="1656" cy="454" rx="160" ry="83" />
      </g>
      <g fill="#ff2414">
        <path d="M299 27L321 30L318 35L437 124L436 126L309 39L306 43z" />
        <path d="M1682 23L1684 38L1679 35L1626 137L1625 136L1672 31L1668 32z" />
        <path d="M151 428L155 412L158 416L205 379L206 380L163 421L168 425z" />
        <path d="M1178 433L1184 416L1187 419L1263 367L1264 368L1192 425L1194 430z" />
        <path d="M1552 486L1552 469L1557 471L1624 367L1625 368L1563 476L1568 479z" />
      </g>
      <path d="M1693 499L1677 490L1681 488L1632 405L1633 404L1688 485L1692 481z" fill="#1e9bff" />
      <g fill="#ff2414">
        <text x="217" y="410">文华lon指标有问题</text>
        <text x="1250" y="412">博弈大师显示没有问题</text>
        <text x="1611" y="461">红色蓝色区分</text>
      </g>
    </svg>
  );
}

export default function App() {
  return (
    <div className="relative grid min-h-screen grid-cols-[1061fr_797fr] overflow-hidden bg-black font-['Noto_Sans_CJK_SC',sans-serif]">
      <LeftWindow />
      <RightWindow />
      <Marks />
    </div>
  );
}
